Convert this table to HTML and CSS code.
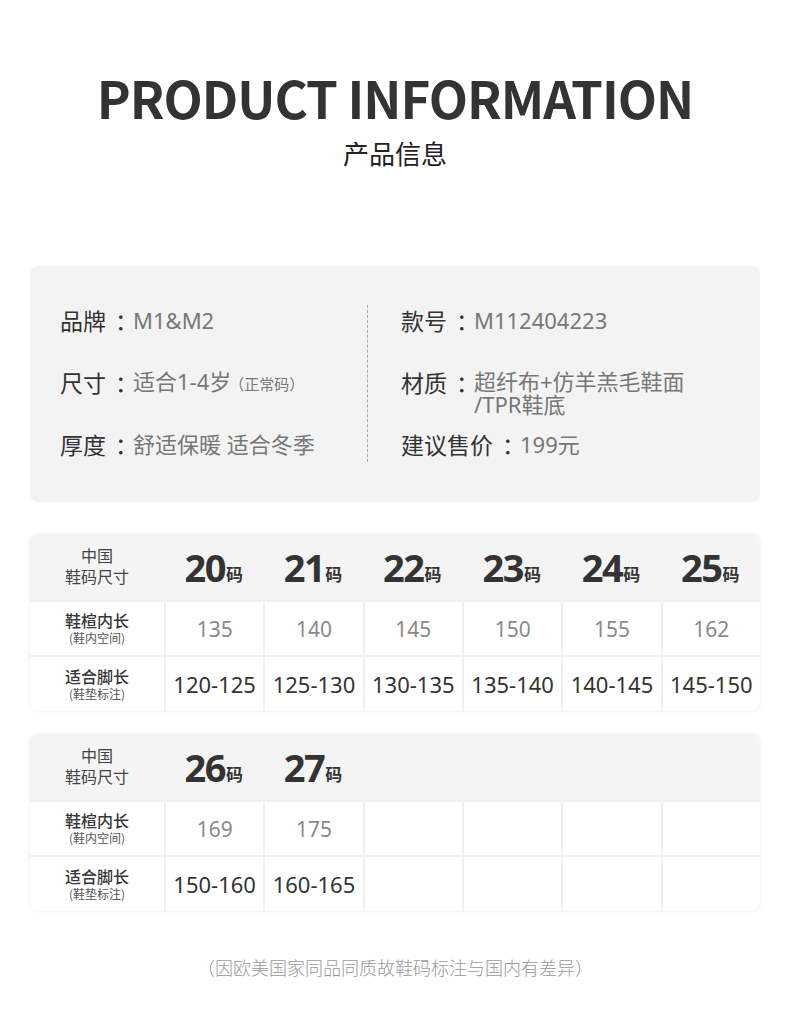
FILE: index.html
```html
<!DOCTYPE html>
<html lang="zh-CN">
<head>
<meta charset="utf-8">
<title>Product Information</title>
<link rel="stylesheet" href="styles.css">
</head>
<body>
<div class="page">
  <header class="head">
    <h1 class="title">PRODUCT INFORMATION</h1>
    <div class="subtitle">产品信息</div>
  </header>

  <section class="info">
    <div class="info-col left">
      <div class="row"><span class="lab">品牌<span class="colon">：</span></span><span class="val">M1&amp;M2</span></div>
      <div class="row"><span class="lab">尺寸<span class="colon">：</span></span><span class="val">适合1-4岁<small>（正常码）</small></span></div>
      <div class="row"><span class="lab">厚度<span class="colon">：</span></span><span class="val">舒适保暖 适合冬季</span></div>
    </div>
    <div class="divider"></div>
    <div class="info-col right">
      <div class="row"><span class="lab">款号<span class="colon">：</span></span><span class="val">M112404223</span></div>
      <div class="row"><span class="lab">材质<span class="colon">：</span></span><span class="val">超纤布+仿羊羔毛鞋面<br>/TPR鞋底</span></div>
      <div class="row"><span class="lab">建议售价<span class="colon">：</span></span><span class="val">199元</span></div>
    </div>
  </section>

  <section class="size-table">
    <div class="cell hd first"><span>中国</span><span>鞋码尺寸</span></div>
    <div class="cell hd"><b>20</b><i>码</i></div>
    <div class="cell hd"><b>21</b><i>码</i></div>
    <div class="cell hd"><b>22</b><i>码</i></div>
    <div class="cell hd"><b>23</b><i>码</i></div>
    <div class="cell hd"><b>24</b><i>码</i></div>
    <div class="cell hd"><b>25</b><i>码</i></div>

    <div class="cell rl"><span class="rl-main">鞋楦内长</span><span class="rl-sub">(鞋内空间)</span></div>
    <div class="cell v1">135</div>
    <div class="cell v1">140</div>
    <div class="cell v1">145</div>
    <div class="cell v1">150</div>
    <div class="cell v1">155</div>
    <div class="cell v1">162</div>

    <div class="cell rl"><span class="rl-main">适合脚长</span><span class="rl-sub">(鞋垫标注)</span></div>
    <div class="cell v2">120-125</div>
    <div class="cell v2">125-130</div>
    <div class="cell v2">130-135</div>
    <div class="cell v2">135-140</div>
    <div class="cell v2">140-145</div>
    <div class="cell v2">145-150</div>
  </section>

  <section class="size-table second">
    <div class="cell hd first"><span>中国</span><span>鞋码尺寸</span></div>
    <div class="cell hd"><b>26</b><i>码</i></div>
    <div class="cell hd"><b>27</b><i>码</i></div>
    <div class="cell hd"></div>
    <div class="cell hd"></div>
    <div class="cell hd"></div>
    <div class="cell hd"></div>

    <div class="cell rl"><span class="rl-main">鞋楦内长</span><span class="rl-sub">(鞋内空间)</span></div>
    <div class="cell v1">169</div>
    <div class="cell v1">175</div>
    <div class="cell v1"></div>
    <div class="cell v1"></div>
    <div class="cell v1"></div>
    <div class="cell v1"></div>

    <div class="cell rl"><span class="rl-main">适合脚长</span><span class="rl-sub">(鞋垫标注)</span></div>
    <div class="cell v2">150-160</div>
    <div class="cell v2">160-165</div>
    <div class="cell v2"></div>
    <div class="cell v2"></div>
    <div class="cell v2"></div>
    <div class="cell v2"></div>
  </section>

  <p class="note">（因欧美国家同品同质故鞋码标注与国内有差异）</p>
</div>
</body>
</html>
```

FILE: styles.css
```css
* { box-sizing: border-box; }
html, body { margin: 0; padding: 0; background: #fff; }
body {
  font-family: "Noto Sans CJK SC", "Noto Sans", sans-serif;
  color: #333;
}
.page {
  width: 790px;
  padding: 0 30px;
}
.head {
  display: flex;
  flex-direction: column;
  align-items: center;
  padding-top: 66px;
}
.title {
  margin: 0;
  font-size: 51px;
  line-height: 62px;
  font-weight: 700;
  color: #333;
  letter-spacing: -1px;
}
.subtitle {
  margin-top: 7px;
  font-size: 26px;
  line-height: 36px;
  color: #222;
}

.info {
  margin-top: 95px;
  height: 236px;
  background: #f3f3f3;
  border-radius: 8px;
  display: flex;
  padding: 41px 0 0 30px;
}
.info-col {
  display: grid;
  grid-auto-rows: 62px;
  align-content: start;
}
.info-col.left { width: 307px; }
.divider {
  width: 0;
  height: 157px;
  margin-top: -2px;
  border-left: 1px dashed #a8a8a8;
}
.info-col.right { padding-left: 33px; }
.row {
  display: flex;
  align-items: flex-start;
  font-size: 23px;
  line-height: 26px;
}
.lab { color: #333; white-space: nowrap; }
.colon {
  margin-left: 9px;
  letter-spacing: -5px;
}
.val {
  color: #777;
  font-family: "Noto Sans", "Noto Sans CJK SC", sans-serif;
  font-size: 22px;
}
.row:nth-child(2) .val { line-height: 23px; margin-top: 1px; }
.val small {
  font-family: "Noto Sans CJK SC", sans-serif;
  font-size: 15px;
  color: #777;
  margin-left: -2px;
}

.size-table {
  margin-top: 32px;
  display: grid;
  grid-template-columns: 134px repeat(6, 1fr);
  grid-template-rows: 66px 55px 56px;
  border-radius: 8px;
  overflow: hidden;
  box-shadow: 0 0 3px rgba(0, 0, 0, 0.10);
  background: #fff;
}
.size-table.second { margin-top: 23px; }
.cell {
  display: flex;
  align-items: center;
  justify-content: center;
  font-family: "Noto Sans", "Noto Sans CJK SC", sans-serif;
}
.cell.hd { background: #f4f4f4; }
.cell.hd b {
  font-size: 38px;
  font-weight: 700;
  color: #333;
  letter-spacing: -1.5px;
  line-height: 1;
}
.cell.hd i {
  font-style: normal;
  font-family: "Noto Sans CJK SC", sans-serif;
  font-size: 17px;
  font-weight: 700;
  color: #333;
  margin-left: 1px;
  margin-top: 12px;
}
.cell.hd.first, .cell.rl {
  flex-direction: column;
  font-family: "Noto Sans CJK SC", sans-serif;
}
.cell.hd.first span {
  font-size: 16px;
  line-height: 21px;
  color: #444;
}
.cell.hd.first { padding-bottom: 2px; }
.cell.rl, .cell.v1, .cell.v2 {
  border-top: 2px solid #f0f0f0;
}
.cell.v1, .cell.v2 { border-left: 2px solid #f0f0f0; }
.rl-main {
  font-size: 16px;
  line-height: 19px;
  font-weight: 500;
  color: #383838;
}
.rl-sub {
  font-size: 12px;
  line-height: 16px;
  color: #555;
}
.cell.v1 {
  font-size: 21px;
  color: #8a8a8a;
}
.cell.v2 {
  font-size: 22px;
  color: #333;
}
.note {
  margin: 44px 0 0;
  text-align: center;
  font-size: 18px;
  line-height: 24px;
  font-weight: 300;
  color: #999;
}
```
